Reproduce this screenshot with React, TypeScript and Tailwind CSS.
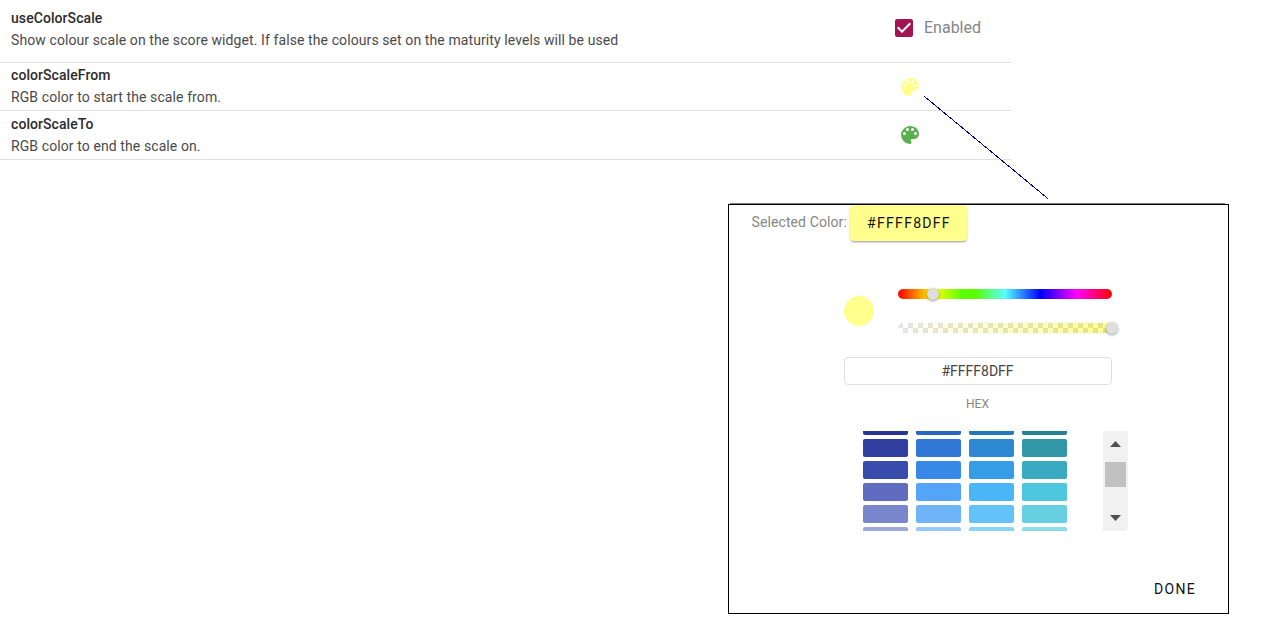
import type { ReactNode } from 'react';

const swatchRows: string[][] = [
  ['bg-[#283593]', 'bg-[#2767bf]', 'bg-[#2479bd]', 'bg-[#25838f]'],
  ['bg-[#303f9f]', 'bg-[#3077d6]', 'bg-[#2d89d2]', 'bg-[#3297a7]'],
  ['bg-[#3a4cab]', 'bg-[#3689e6]', 'bg-[#359de5]', 'bg-[#3aaac1]'],
  ['bg-[#5f6cc0]', 'bg-[#54a5f8]', 'bg-[#49b6f8]', 'bg-[#4dc6de]'],
  ['bg-[#7986cb]', 'bg-[#70b4f8]', 'bg-[#63c3f9]', 'bg-[#66cfe1]'],
  ['bg-[#9fa8da]', 'bg-[#98caf9]', 'bg-[#8ad3fa]', 'bg-[#8bdee9]'],
];

function Palette({ className }: { className: string }) {
  return (
    <svg viewBox="0 0 24 24" className={`block size-6 fill-current ${className}`}>
      <path d="M12 3a9 9 0 0 0 0 18c.83 0 1.5-.67 1.5-1.5 0-.39-.15-.74-.39-1.01-.23-.26-.38-.61-.38-.99 0-.83.67-1.5 1.5-1.5H16c2.76 0 5-2.24 5-5 0-4.42-4.03-8-9-8Zm-5.5 9a1.5 1.5 0 1 1 0-3 1.5 1.5 0 0 1 0 3Zm3-4a1.5 1.5 0 1 1 0-3 1.5 1.5 0 0 1 0 3Zm5 0a1.5 1.5 0 1 1 0-3 1.5 1.5 0 0 1 0 3Zm3 4a1.5 1.5 0 1 1 0-3 1.5 1.5 0 0 1 0 3Z" />
    </svg>
  );
}

function Row({ name, text, className, children }: { name: string; text: string; className: string; children: ReactNode }) {
  return (
    <div className={`flex w-[1011px] border-b border-[#dfdfdf] pl-[11px] ${className}`}>
      <div className="w-[881px] shrink-0 text-sm leading-[22px]">
        <div className="font-medium tracking-[0.07px] text-[#2c2c2c]">{name}</div>
        <div className="tracking-[0.095px] text-[#4a4a4a]">{text}</div>
      </div>
      {children}
    </div>
  );
}

function ColorDialog() {
  return (
    <section className="ml-[728px] mt-[43px] w-[501px]">
      <div className="ml-[2px] h-px w-[495px] bg-[#808080]" />
      <div className="flex h-[410px] flex-col border border-black bg-white">
        <div className="flex h-9 items-start pl-[22px]">
          <span className="w-[99px] whitespace-nowrap pl-[0.5px] pt-[7px] text-sm leading-5 tracking-[0.1px] text-[#868686]">Selected Color:</span>
          <button className="h-9 w-[117px] rounded bg-[#ffff8d] pl-px text-sm font-normal leading-9 tracking-[1.3px] text-[#111] shadow-[0_2px_2px_-1px_rgba(0,0,0,0.3),0_1px_3px_rgba(0,0,0,0.15)]">#FFFF8DFF</button>
        </div>
        <div className="ml-[115px] mt-[48px] flex h-11 w-[268px]">
          <div className="mt-[7px] size-[30px] rounded-full bg-[#ffff8d]" />
          <div className="ml-6 w-[214px]">
            <div className="relative h-[10px] rounded-full bg-[linear-gradient(90deg,#f00_0%,#ff0_16.66%,#5bff00_30%,#5bff00_36%,#56ffff_50%,#00f_66.66%,#f0f_83.33%,#f00_100%)]">
              <div className="absolute -top-px left-[29px] size-3 rounded-full bg-[#dedede] shadow-[0_1px_3px_rgba(0,0,0,0.4)]" />
            </div>
            <div className="relative mt-6 h-[10px] rounded-full bg-[repeating-conic-gradient(transparent_0_25%,rgba(0,0,0,0.1)_0_50%),linear-gradient(90deg,rgba(255,255,141,0),#ffff8d)] bg-[length:10px_10px,100%_100%]">
              <div className="absolute -top-px left-[208px] size-3 rounded-full bg-[#dedede] shadow-[0_1px_3px_rgba(0,0,0,0.4)]" />
            </div>
          </div>
        </div>
        <div className="ml-[115px] mt-[24px] h-7 w-[268px] rounded border border-[#e0e0e0] pr-px text-center text-sm leading-[26px] text-[#444]">#FFFF8DFF</div>
        <div className="ml-[115px] mt-[11px] h-4 w-[268px] pr-px text-center text-xs leading-4 text-[#868686]">HEX</div>
        <div className="ml-[134px] mt-[19px] flex h-[100px] items-stretch">
          <div className="flex h-[100px] w-[240px] flex-col justify-end overflow-hidden">
            <div className="-mb-[14px] flex flex-col gap-1">
              {swatchRows.map((row) => (
                <div key={row[0]} className="flex gap-2">
                  {row.map((color) => <div key={color} className={`h-[18px] w-[45px] rounded-[2px] ${color}`} />)}
                </div>
              ))}
            </div>
          </div>
          <div className="flex w-[25px] flex-col items-start rounded-br bg-[#f1f1f1]">
            <svg viewBox="0 0 11 6" className="ml-[7px] mt-[10px] h-[6px] w-[11px] fill-[#505050]"><path d="M0 6 5.5 0 11 6Z" /></svg>
            <div className="ml-[2px] mt-[15px] h-[25px] w-[21px] bg-[#c1c1c1]" />
            <svg viewBox="0 0 11 6" className="ml-[7px] mt-[28px] h-[6px] w-[11px] fill-[#505050]"><path d="m0 0 5.5 6L11 0Z" /></svg>
          </div>
        </div>
        <button className="ml-[425px] mt-[48px] h-5 w-max text-sm font-normal leading-5 tracking-[1.3px] text-[#111]">DONE</button>
      </div>
    </section>
  );
}

export default function App() {
  return (
    <main className="relative h-[637px] w-[1270px] overflow-hidden bg-white font-['Roboto',sans-serif]">
      <Row name="useColorScale" text="Show colour scale on the score widget. If false the colours set on the maturity levels will be used" className="h-[63px] pt-[7px]">
        <label className="flex h-6 items-center pt-[17px]">
          <svg viewBox="0 0 24 24" className="size-6 fill-[#a31455]">
            <path d="m10 17-5-5 1.41-1.42L10 14.17l7.59-7.59L19 8M19 3H5a2 2 0 0 0-2 2v14a2 2 0 0 0 2 2h14a2 2 0 0 0 2-2V5a2 2 0 0 0-2-2Z" />
          </svg>
          <span className="ml-2 text-base leading-5 text-[#868686]">Enabled</span>
        </label>
      </Row>
      <Row name="colorScaleFrom" text="RGB color to start the scale from." className="h-12 pt-px">
        <div className="ml-[6px] mt-[11px]"><Palette className="text-[#ffff8d]" /></div>
      </Row>
      <Row name="colorScaleTo" text="RGB color to end the scale on." className="h-[49px] pt-[2px]">
        <div className="ml-[6px] mt-[10px]"><Palette className="text-[#5aaf50]" /></div>
      </Row>
      <ColorDialog />
      <svg viewBox="0 0 125 103" className="absolute left-[924px] top-[96px] h-[103px] w-[125px]">
        <path d="M.5.5 124 102.7" stroke="#000080" shapeRendering="crispEdges" />
      </svg>
    </main>
  );
}
